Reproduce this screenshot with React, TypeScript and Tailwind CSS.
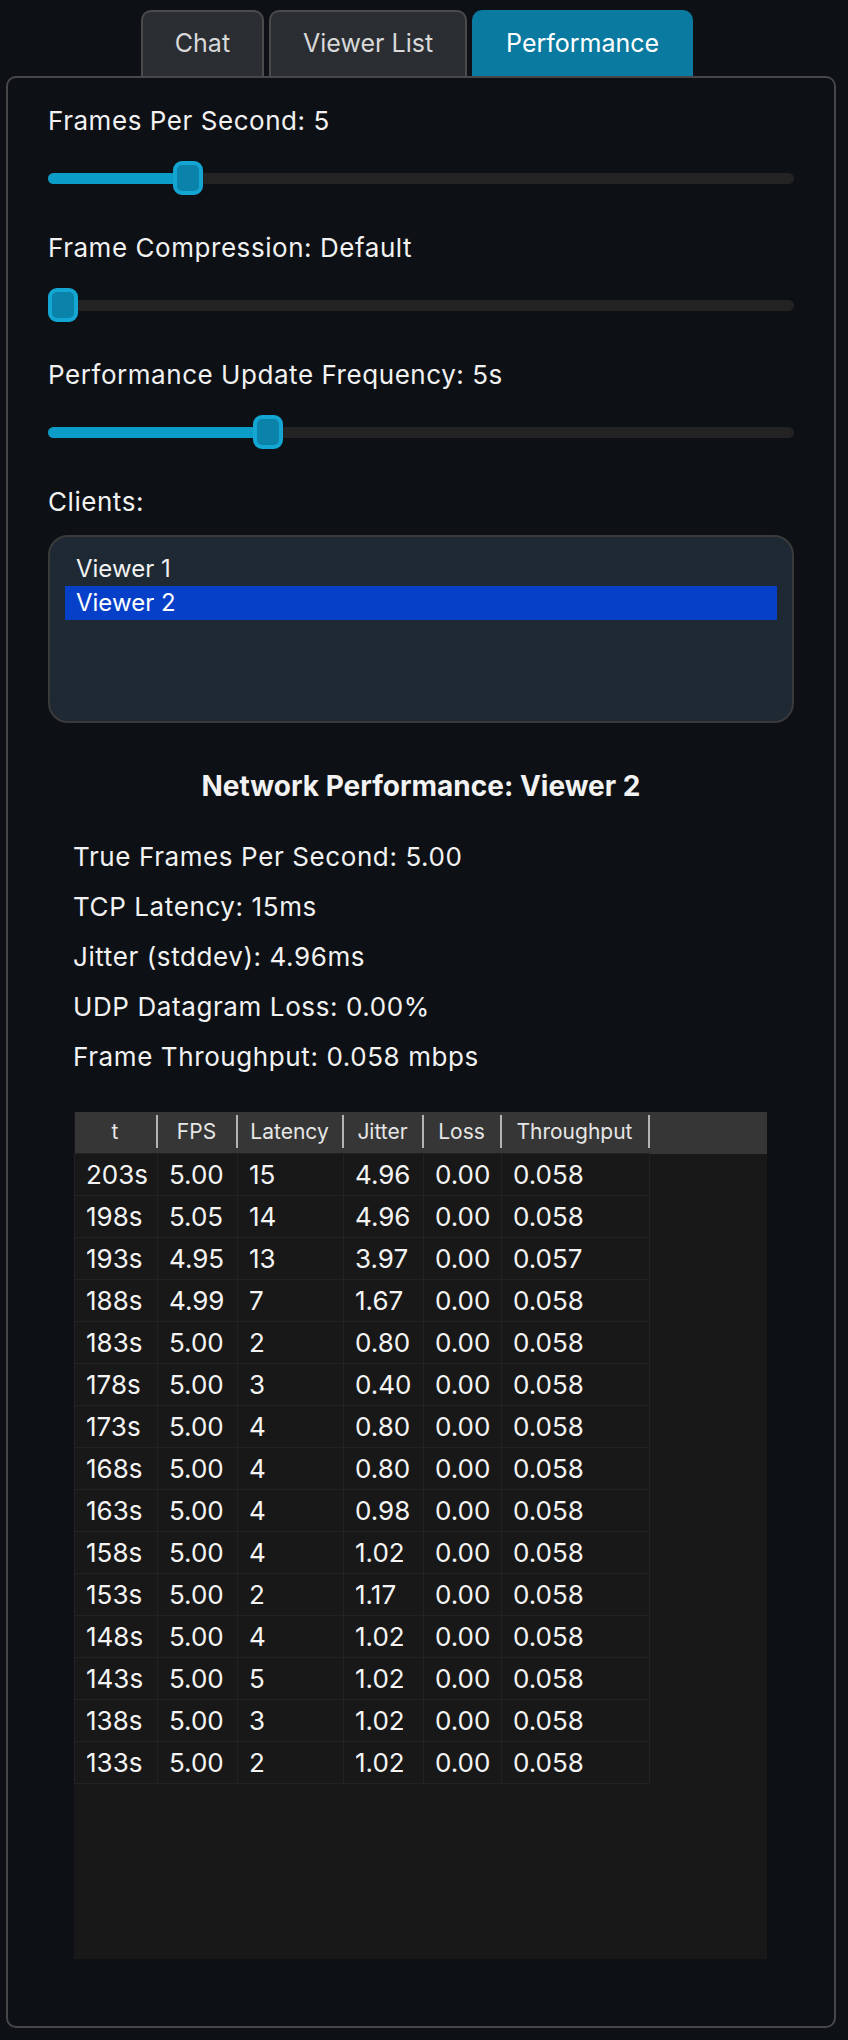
import React from "react";

const rows = [
  ["203s", "5.00", "15", "4.96", "0.00", "0.058"],
  ["198s", "5.05", "14", "4.96", "0.00", "0.058"],
  ["193s", "4.95", "13", "3.97", "0.00", "0.057"],
  ["188s", "4.99", "7", "1.67", "0.00", "0.058"],
  ["183s", "5.00", "2", "0.80", "0.00", "0.058"],
  ["178s", "5.00", "3", "0.40", "0.00", "0.058"],
  ["173s", "5.00", "4", "0.80", "0.00", "0.058"],
  ["168s", "5.00", "4", "0.80", "0.00", "0.058"],
  ["163s", "5.00", "4", "0.98", "0.00", "0.058"],
  ["158s", "5.00", "4", "1.02", "0.00", "0.058"],
  ["153s", "5.00", "2", "1.17", "0.00", "0.058"],
  ["148s", "5.00", "4", "1.02", "0.00", "0.058"],
  ["143s", "5.00", "5", "1.02", "0.00", "0.058"],
  ["138s", "5.00", "3", "1.02", "0.00", "0.058"],
  ["133s", "5.00", "2", "1.02", "0.00", "0.058"],
];

const columns = [
  { name: "t", w: "w-[83px]" },
  { name: "FPS", w: "w-[80px]" },
  { name: "Latency", w: "w-[106px]" },
  { name: "Jitter", w: "w-[80px]" },
  { name: "Loss", w: "w-[78px]" },
  { name: "Throughput", w: "w-[148px]" },
];

const TRACK = 746;
const THUMB = 30;

function Slider({ label, value, min, max }: { label: string; value: number; min: number; max: number }) {
  const left = ((value - min) / (max - min)) * (TRACK - THUMB);
  return (
    <div className="flex flex-col">
      <div className="text-[26px] leading-[32px] tracking-[0.55px]">{label}</div>
      <div className="relative mt-[24px] h-[34px] flex items-center">
        <div className="h-[11px] w-full rounded-full bg-[#232323]">
          <div className="h-full rounded-full bg-[#0b9cc7]" style={{ width: left + THUMB / 2 }} />
        </div>
        <div
          className="absolute top-0 h-[34px] w-[30px] rounded-[9px] border-[4px] border-[#13a6d2] bg-[#0a82aa]"
          style={{ left }}
        />
      </div>
    </div>
  );
}

export default function App() {
  return (
    <div className="min-h-[2040px] bg-[#0d1116] pt-[10px] text-[#f2f2f2] font-['Inter','Noto_Sans',sans-serif]">
      <div className="flex justify-center gap-[5px] pr-[14px]">
        <div className="h-[66px] px-8 flex items-center rounded-t-[10px] border-2 border-b-0 border-[#4b4b4b] bg-[#2a2e33] text-[25px] text-[#d8d8d8]">
          Chat
        </div>
        <div className="h-[66px] px-8 flex items-center rounded-t-[10px] border-2 border-b-0 border-[#4b4b4b] bg-[#2a2e33] text-[25px] text-[#d8d8d8]">
          Viewer List
        </div>
        <div className="h-[66px] px-8 flex items-center rounded-t-[10px] border-2 border-b-0 border-[#0a7aa0] bg-[#0a7aa0] text-[25px] text-white">
          Performance
        </div>
      </div>

      <div className="ml-[6px] mr-[12px] border-2 border-[#474747] rounded-[10px] px-10 pt-[27px] pb-[67px]">
        <div className="flex flex-col gap-[37px]">
          <Slider label="Frames Per Second: 5" value={5} min={1} max={24} />
          <Slider label="Frame Compression: Default" value={0} min={0} max={10} />
          <Slider label="Performance Update Frequency: 5s" value={5} min={1} max={15} />
          <div className="text-[26px] leading-[32px] tracking-[0.55px]">Clients:</div>
        </div>

        <div className="mt-[17px] h-[188px] rounded-[20px] border-2 border-[#3a3a3a] bg-[#1e2933] p-[15px]">
          <div className="h-[34px] pl-[11px] text-[24px] leading-[34px]">Viewer 1</div>
          <div className="h-[34px] pl-[11px] text-[24px] leading-[34px] bg-[#0640c9] text-white">Viewer 2</div>
        </div>

        <div className="mt-[45px] text-center text-[28px] leading-[36px] font-bold">Network Performance: Viewer 2</div>

        <div className="mt-[28px] pl-[25px] text-[26px] leading-[50px] tracking-[0.6px]">
          <div>True Frames Per Second: 5.00</div>
          <div>TCP Latency: 15ms</div>
          <div>Jitter (stddev): 4.96ms</div>
          <div>UDP Datagram Loss: 0.00%</div>
          <div>Frame Throughput: 0.058 mbps</div>
        </div>

        <div className="mt-[30px] ml-[26px] mr-[27px] h-[847px] bg-[#181818]">
          <table className="w-full table-fixed border-collapse">
            <thead>
              <tr className="bg-[#363636]">
                {columns.map((c) => (
                  <th key={c.name} className={`${c.w} p-0 pt-[3px] pb-[5px] font-normal`}>
                    <div className="flex h-[33px] items-center justify-center border-r-2 border-[#b4b4b4] text-[21px] text-[#e6e6e6]">
                      {c.name}
                    </div>
                  </th>
                ))}
                <th className="p-0" />
              </tr>
            </thead>
            <tbody>
              {rows.map((r) => (
                <tr key={r[0]}>
                  {r.map((v, i) => (
                    <td key={i} className="h-[41px] border border-[#222222] pl-[11px] text-[26px] leading-[41px] text-[#f4f4f4]">
                      {v}
                    </td>
                  ))}
                  <td className="p-0" />
                </tr>
              ))}
            </tbody>
          </table>
        </div>
      </div>
    </div>
  );
}
